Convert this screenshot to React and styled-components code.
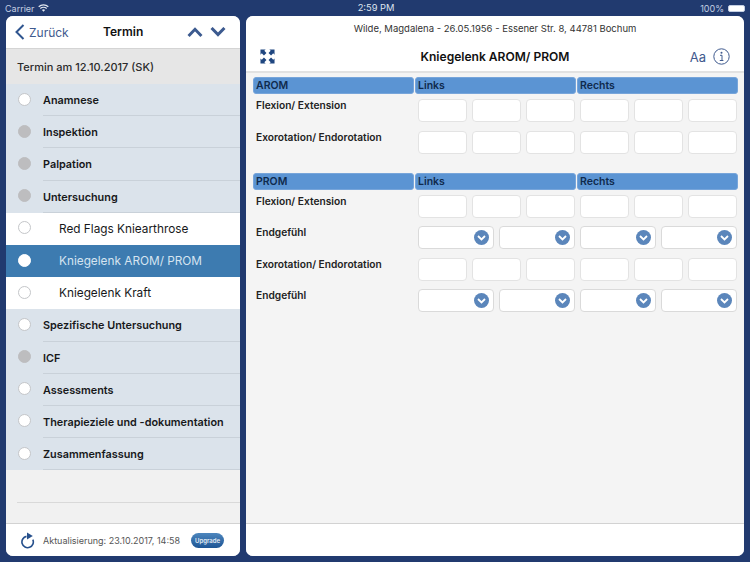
import React from "react";
import styled, { createGlobalStyle } from "styled-components";

const Global = createGlobalStyle`
  html, body { margin: 0; padding: 0; background: #213a6f; }
  * { box-sizing: border-box; }
  body { font-family: Inter, "Liberation Sans", sans-serif; color: #1c1c1e; }
`;
const Page = styled.div`
  width: 750px; height: 562px; background: #213a6f; overflow: hidden;
  display: flex; flex-direction: column;
`;
const StatusBar = styled.div`
  height: 16px; flex: none; position: relative; display: flex; align-items: center;
  justify-content: space-between; padding: 0 5px; color: #c3cee2; font-size: 9px;
`;
const StatusSide = styled.div`display: flex; align-items: center; gap: 3px;`;
const StatusTime = styled.div`
  position: absolute; left: 0; right: 0; top: 2px; text-align: center; padding-left: 2px; color: #dfe5f0; font-size: 9.3px;
`;
const Battery = styled.div`
  width: 17px; height: 7px; border-radius: 2px; background: #fff; border: 1px solid #c3cee2; margin-left: 1px;
`;
const Panels = styled.div`
  display: flex; gap: 6px; padding: 0 6px 6px; flex: 1; min-height: 0;
`;
const LeftPanel = styled.div`
  width: 234px; flex: none; border-radius: 7px; overflow: hidden; background: #f1f1f1;
  display: flex; flex-direction: column;
`;
const RightPanel = styled.div`
  flex: 1; border-radius: 7px; overflow: hidden; background: #f4f4f4; display: flex; flex-direction: column;
`;
const Nav = styled.div`
  height: 33px; flex: none; background: #fff; border-bottom: 1px solid #d4d4d4; display: flex; align-items: center; position: relative;
`;
const Back = styled.div`
  display: flex; align-items: center; color: #3f5a8e; font-size: 12px; padding-left: 9px; gap: 4px;
`;
const NavTitle = styled.div`
  position: absolute; left: 97px; top: 8px; font-size: 12px; font-weight: 600; color: #111;
`;
const NavArrows = styled.div`
  margin-left: auto; display: flex; gap: 7px; padding-right: 14px;
`;
const DateBar = styled.div`
  height: 35px; flex: none; background: #e6e6e6; display: flex; align-items: center; padding-left: 11px;
  font-size: 11px; font-weight: 500; color: #2b2b2b;
`;
const List = styled.div`display: flex; flex-direction: column; flex: none;`;
const rowBg = { group: "#dbe3eb", sub: "#fff", active: "#3d7bb0" };
const Row = styled.div`
  height: 32.2px; position: relative; display: flex; align-items: center; background: ${p => rowBg[p.$kind]};
  padding-left: ${p => (p.$kind === "group" ? "37px" : "53px")};
  color: ${p => (p.$kind === "active" ? "#d5e4f0" : "#17181a")};
  font-size: ${p => (p.$kind === "group" ? "10.85px" : "11.8px")};
  font-weight: ${p => (p.$kind === "group" ? 600 : 400)};
  &::after {
    content: ""; position: absolute; left: 37px; right: 0; bottom: 0; height: 1px;
    background: ${p => (p.$kind === "group" ? "#c9d1d9" : "transparent")};
  }
`;
const Dot = styled.span`
  position: absolute; left: 12px; top: 50%; margin-top: -7.5px; width: 13px; height: 13px; border-radius: 50%;
  background: ${p => (p.$gray ? "#bdbdbf" : "#fff")};
  border: 1px solid ${p => (p.$gray ? "#bdbdbf" : p.$active ? "#fff" : "#c4c6c9")};
`;
const Spacer = styled.div`
  flex: 1; position: relative;
  &::after { content: ""; position: absolute; left: 11px; right: 0; top: 32px; height: 1px; background: #d9d9d9; }
`;
const Footer = styled.div`
  height: 33px; flex: none; background: #fff; border-top: 1px solid #d2d2d2; display: flex; align-items: center;
`;
const LeftFoot = styled(Footer)`padding-left: 14px; font-size: 9px; color: #555;`;
const FootText = styled.span`margin-left: 8px; white-space: nowrap;`;
const Upgrade = styled.span`
  margin-left: 11px; width: 33px; height: 15px; border-radius: 8px; background: linear-gradient(#4d86bd, #1d5595);
  color: #e5edf5; font-size: 6px; font-weight: 600; display: flex; align-items: center; justify-content: center;
`;
const TopBar = styled.div`
  height: 57px; flex: none; background: #fff; border-bottom: 2px solid #e2e2e2; display: flex; flex-direction: column;
`;
const Patient = styled.div`
  text-align: center; font-size: 9.5px; color: #333; padding-top: 7px; height: 26px;
`;
const TitleRow = styled.div`
  display: grid; grid-template-columns: 1fr auto 1fr; align-items: center; height: 29px; padding: 0 14px;
`;
const Title = styled.div`font-size: 12.05px; font-weight: 600; color: #111;`;
const Tools = styled.div`
  display: flex; align-items: center; justify-content: flex-end; gap: 7px; color: #3f5a8e; font-size: 13px;
`;
const Content = styled.div`
  flex: 1; padding: 4px 7px 0; display: flex; flex-direction: column;
`;
const Section = styled.section`margin-bottom: 10.4px;`;
const HeadRow = styled.div`display: grid; grid-template-columns: repeat(3, 161px); gap: 1px; margin-bottom: 5px;`;
const HeadCell = styled.div`
  height: 17px; border-radius: 3px; background: #5b94d3; border: 1px solid #77a5da; padding-left: 2px;
  font-size: 10.5px; font-weight: 600; color: #0f2a4d; display: flex; align-items: center;
`;
const FieldRow = styled.div`
  display: flex; height: 23px; margin-bottom: 8.6px;
`;
const Label = styled.div`
  width: 165px; flex: none; padding-left: 3px; font-size: 10.2px; font-weight: 600; color: #222; line-height: 13px;
`;
const Inputs = styled.div`display: grid; grid-template-columns: repeat(6, 49px); gap: 5px;`;
const Selects = styled.div`display: grid; grid-template-columns: repeat(4, 76px); gap: 5px;`;
const Input = styled.div`
  height: 23px; background: #fff; border: 1px solid #e3e3e3; border-radius: 4px;
`;
const Select = styled(Input)`
  display: flex; align-items: center; justify-content: flex-end; padding-right: 4px;
  border-color: #dadada;
`;

const Chevron = ({ up, size = 16, color = "#3c5a8f" }) => (
  <svg width={size} height={size * 0.62} viewBox="0 0 16 10" fill="none">
    <path d={up ? "M1.500 9 8 2.300 14.500 9" : "M1.500 1 8 7.700 14.500 1"} stroke={color} strokeWidth="3" />
  </svg>
);
const BackIcon = () => (
  <svg width="10" height="16" viewBox="0 0 10 16" fill="none">
    <path d="M8.500 1 1.500 8l7 7" stroke="#2f558f" strokeWidth="2" />
  </svg>
);
const SelectDot = () => (
  <svg width="15" height="15" viewBox="0 0 15 15">
    <circle cx="7.500" cy="7.500" r="7.500" fill="#5b86bb" />
    <path d="M4 6l3.500 3.500L11 6" fill="none" stroke="#fff" strokeWidth="1.800" />
  </svg>
);
const Wifi = () => (
  <svg width="11" height="8" viewBox="0 0 11 8" fill="none">
    <path d="M.7 2.800a7 7 0 0 1 9.600 0M2.300 4.500a4.700 4.700 0 0 1 6.400 0" stroke="#e4e9f2" strokeWidth="1.200" />
    <path d="M3.900 6.100a2.300 2.300 0 0 1 3.200 0L5.500 7.800z" fill="#e4e9f2" />
  </svg>
);
const Refresh = () => (
  <svg width="15" height="17" viewBox="0 0 15 17" fill="none">
    <path d="M6.500 4.400a5.700 5.700 0 1 0 6.300 3.200" stroke="#26508c" strokeWidth="1.600" />
    <path d="M7 .6 12.800 4 7 7.400z" fill="#26508c" />
  </svg>
);
const Expand = () => (
  <svg width="15" height="15" viewBox="0 0 16 16" fill="#1f4680">
    <path d="M.5.500h5.500L4.600 1.900 6.900 4.200 4.200 6.900 1.900 4.600.5 6z" />
    <path d="M15.500.500H10l1.400 1.400-2.300 2.300 2.700 2.700 2.300-2.300L15.500 6z" />
    <path d="M.5 15.500H6l-1.400-1.400 2.300-2.300-2.700-2.700-2.300 2.300L.5 10z" />
    <path d="M15.500 15.500H10l1.400-1.400-2.300-2.300 2.700-2.700 2.300 2.300 1.400-1.400z" />
  </svg>
);
const Info = () => (
  <svg width="17" height="17" viewBox="0 0 17 17" fill="none">
    <circle cx="8.500" cy="8.500" r="7.700" stroke="#3f5a8e" strokeWidth="1" />
    <circle cx="8.500" cy="4.800" r="1" fill="#3f5a8e" />
    <path d="M7 7.300h2v5M6.800 12.500h3.600" stroke="#3f5a8e" strokeWidth="1" />
  </svg>
);

const rows = [
  ["Anamnese", "group", false],
  ["Inspektion", "group", true],
  ["Palpation", "group", true],
  ["Untersuchung", "group", true],
  ["Red Flags Kniearthrose", "sub", false],
  ["Kniegelenk AROM/ PROM", "active", false],
  ["Kniegelenk Kraft", "sub", false],
  ["Spezifische Untersuchung", "group", false],
  ["ICF", "group", true],
  ["Assessments", "group", false],
  ["Therapieziele und -dokumentation", "group", false],
  ["Zusammenfassung", "group", false],
];

const InputField = ({ label }) => (
  <FieldRow>
    <Label>{label}</Label>
    <Inputs>{[0, 1, 2, 3, 4, 5].map(i => <Input key={i} />)}</Inputs>
  </FieldRow>
);
const SelectField = ({ label }) => (
  <FieldRow>
    <Label>{label}</Label>
    <Selects>{[0, 1, 2, 3].map(i => <Select key={i}><SelectDot /></Select>)}</Selects>
  </FieldRow>
);
const Head = ({ name }) => (
  <HeadRow>
    <HeadCell>{name}</HeadCell>
    <HeadCell>Links</HeadCell>
    <HeadCell>Rechts</HeadCell>
  </HeadRow>
);

export default function App() {
  return (
    <Page>
      <Global />
      <StatusBar>
        <StatusSide>Carrier <Wifi /></StatusSide>
        <StatusTime>2:59 PM</StatusTime>
        <StatusSide>100% <Battery /></StatusSide>
      </StatusBar>
      <Panels>
        <LeftPanel>
          <Nav>
            <Back><BackIcon />Zurück</Back>
            <NavTitle>Termin</NavTitle>
            <NavArrows><Chevron up /><Chevron /></NavArrows>
          </Nav>
          <DateBar>Termin am 12.10.2017 (SK)</DateBar>
          <List>
            {rows.map(([t, k, g]) => (
              <Row key={t} $kind={k}><Dot $gray={g} $active={k === "active"} />{t}</Row>
            ))}
          </List>
          <Spacer />
          <LeftFoot>
            <Refresh />
            <FootText>Aktualisierung: 23.10.2017, 14:58</FootText>
            <Upgrade>Upgrade</Upgrade>
          </LeftFoot>
        </LeftPanel>
        <RightPanel>
          <TopBar>
            <Patient>Wilde, Magdalena - 26.05.1956 - Essener Str. 8, 44781 Bochum</Patient>
            <TitleRow>
              <Expand />
              <Title>Kniegelenk AROM/ PROM</Title>
              <Tools>Aa <Info /></Tools>
            </TitleRow>
          </TopBar>
          <Content>
            <Section>
              <Head name="AROM" />
              <InputField label="Flexion/ Extension" />
              <InputField label="Exorotation/ Endorotation" />
            </Section>
            <Section>
              <Head name="PROM" />
              <InputField label="Flexion/ Extension" />
              <SelectField label="Endgefühl" />
              <InputField label="Exorotation/ Endorotation" />
              <SelectField label="Endgefühl" />
            </Section>
          </Content>
          <Footer />
        </RightPanel>
      </Panels>
    </Page>
  );
}
